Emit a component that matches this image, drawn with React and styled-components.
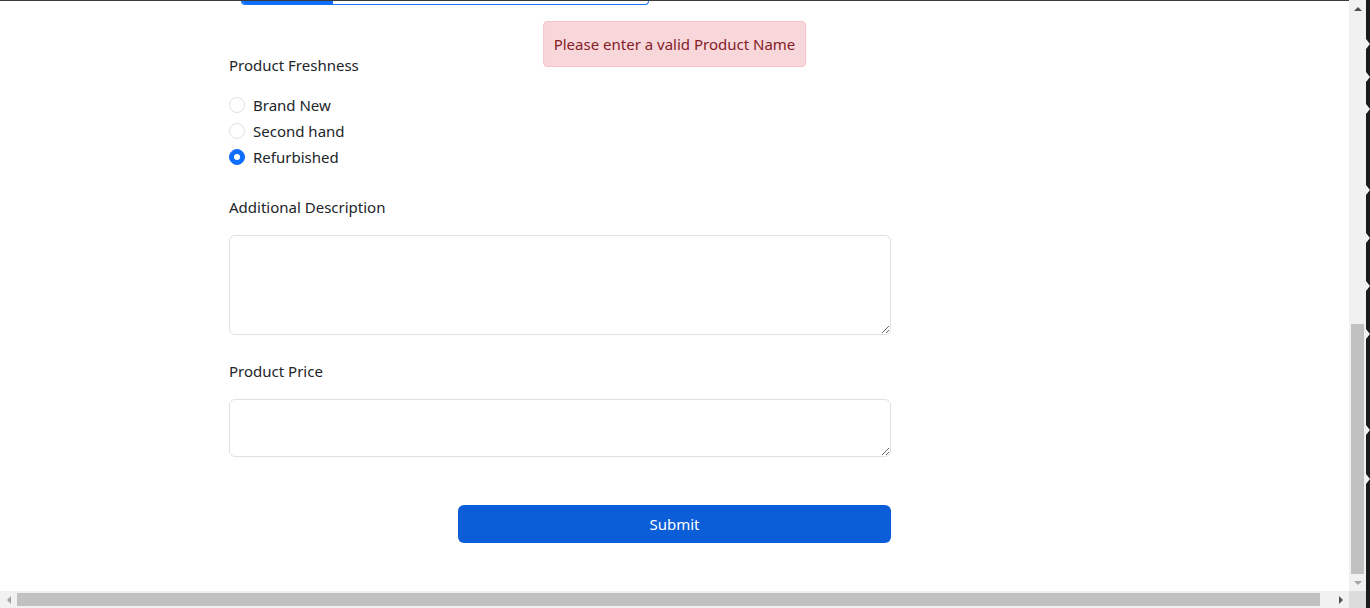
import React from "react";
import styled, { createGlobalStyle } from "styled-components";

const GlobalStyle = createGlobalStyle`
  html, body {
    margin: 0;
    padding: 0;
    overflow: hidden;
    background: #1e1e1e;
  }
  * {
    box-sizing: border-box;
  }
`;

const Screen = styled.div`
  display: flex;
  width: 1370px;
  height: 608px;
  font-family: "Noto Sans", "Open Sans", sans-serif;
  color: #212529;
`;

const Main = styled.div`
  display: flex;
  flex-direction: column;
  width: 1366px;
`;

const Viewport = styled.div`
  display: flex;
  height: 591px;
`;

const Page = styled.div`
  position: relative;
  flex: 1;
  background: #fff;
  border-top: 1px solid #3a3a3a;
  display: flex;
  justify-content: center;
`;

const Container = styled.div`
  width: 891px;
  display: flex;
  flex-direction: column;
`;

const ProgressTail = styled.div`
  margin-left: 12px;
  width: 408px;
  height: 4px;
  border: 1px solid #1a73ff;
  border-top: none;
  border-radius: 0 0 5px 5px;
  display: flex;
`;

const ProgressFill = styled.div`
  width: 91px;
  background: #0d6efd;
  border-radius: 0 0 0 4px;
`;

const Alert = styled.div`
  position: absolute;
  top: 20px;
  left: 50%;
  transform: translateX(-50%);
  padding: 0 10px;
  height: 46px;
  display: flex;
  align-items: center;
  background: #f8d7da;
  border: 1px solid #f5c2c7;
  border-radius: 4px;
  color: #842029;
  font-size: 15px;
  white-space: nowrap;
`;

const Field = styled.div`
  width: 662px;
  display: flex;
  flex-direction: column;
  margin-top: ${(p) => p.$top}px;
`;

const Label = styled.div`
  font-size: 15px;
  line-height: 22px;
  margin-bottom: ${(p) => p.$gap}px;
`;

const RadioList = styled.div`
  display: flex;
  flex-direction: column;
  gap: 4px;
`;

const RadioRow = styled.label`
  display: flex;
  align-items: center;
  gap: 8px;
  font-size: 15px;
  line-height: 22px;
`;

const RadioDot = styled.span`
  width: 16px;
  height: 16px;
  border-radius: 50%;
  border: 1px solid ${(p) => (p.$checked ? "#0d6efd" : "#dee2e6")};
  background: ${(p) => (p.$checked ? "#0d6efd" : "#fff")};
  display: flex;
  align-items: center;
  justify-content: center;
  &::after {
    content: "";
    width: 6px;
    height: 6px;
    border-radius: 50%;
    background: ${(p) => (p.$checked ? "#fff" : "transparent")};
  }
`;

const TextArea = styled.textarea`
  width: 662px;
  height: ${(p) => p.$h}px;
  border: 1px solid #dee2e6;
  border-radius: 6px;
  padding: 6px 12px;
  font-family: inherit;
  font-size: 15px;
  outline: none;
  background: #fff;
`;

const SubmitRow = styled.div`
  display: flex;
  justify-content: center;
  margin-top: 48px;
`;

const SubmitButton = styled.button`
  width: 433px;
  height: 38px;
  border: none;
  border-radius: 6px;
  background: #0b5ed7;
  color: #fff;
  font-family: inherit;
  font-size: 15px;
`;

const VScroll = styled.div`
  width: 17px;
  background: #f1f1f1;
  display: flex;
  flex-direction: column;
  align-items: center;
`;

const Arrow = styled.div`
  width: 17px;
  height: 17px;
  display: flex;
  align-items: center;
  justify-content: center;
  &::after {
    content: "";
    border: 4px solid transparent;
    ${(p) => p.$dir === "up" && "border-bottom: 4px solid #505050; border-top: none;"}
    ${(p) => p.$dir === "down" && "border-top: 4px solid #a3a3a3; border-bottom: none;"}
    ${(p) => p.$dir === "left" && "border-right: 4px solid #a3a3a3; border-left: none;"}
    ${(p) => p.$dir === "right" && "border-left: 4px solid #505050; border-right: none;"}
  }
`;

const VTrack = styled.div`
  flex: 1;
  width: 100%;
  display: flex;
  flex-direction: column;
  justify-content: flex-end;
  align-items: center;
`;

const VThumb = styled.div`
  width: 13px;
  height: 250px;
  background: #c1c1c1;
`;

const HScrollRow = styled.div`
  display: flex;
  height: 17px;
`;

const HScroll = styled.div`
  flex: 1;
  background: #f1f1f1;
  display: flex;
  align-items: center;
`;

const HThumb = styled.div`
  width: 1303px;
  height: 13px;
  background: #c1c1c1;
`;

const HSpacer = styled.div`
  flex: 1;
`;

const Corner = styled.div`
  width: 17px;
  background: #dcdcdc;
`;

const Edge = styled.div`
  position: relative;
  width: 4px;
  background: #1b1b1b;
`;

const Notch = styled.span`
  position: absolute;
  right: 0;
  width: 0;
  height: 0;
  border-top: 5px solid transparent;
  border-bottom: 5px solid transparent;
  border-left: 4px solid #f2f2f2;
`;

const notches = [39, 72, 104, 185, 233, 281, 329, 425, 474];

const options = [
  { label: "Brand New", checked: false },
  { label: "Second hand", checked: false },
  { label: "Refurbished", checked: true },
];

export default function App() {
  return (
    <Screen>
      <GlobalStyle />
      <Main>
        <Viewport>
          <Page>
            <Alert>Please enter a valid Product Name</Alert>
            <Container>
              <ProgressTail>
                <ProgressFill />
              </ProgressTail>
              <Field $top={49}>
                <Label $gap={18}>Product Freshness</Label>
                <RadioList>
                  {options.map((o) => (
                    <RadioRow key={o.label}>
                      <RadioDot $checked={o.checked} />
                      {o.label}
                    </RadioRow>
                  ))}
                </RadioList>
              </Field>
              <Field $top={28}>
                <Label $gap={17}>Additional Description</Label>
                <TextArea $h={100} />
              </Field>
              <Field $top={25}>
                <Label $gap={17}>Product Price</Label>
                <TextArea $h={58} />
              </Field>
              <SubmitRow>
                <SubmitButton>Submit</SubmitButton>
              </SubmitRow>
            </Container>
          </Page>
          <VScroll>
            <Arrow $dir="up" />
            <VTrack>
              <VThumb />
            </VTrack>
            <Arrow $dir="down" />
          </VScroll>
        </Viewport>
        <HScrollRow>
          <HScroll>
            <Arrow $dir="left" />
            <HThumb />
            <HSpacer />
            <Arrow $dir="right" />
          </HScroll>
          <Corner />
        </HScrollRow>
      </Main>
      <Edge>
        {notches.map((y) => (
          <Notch key={y} style={{ top: y }} />
        ))}
      </Edge>
    </Screen>
  );
}
